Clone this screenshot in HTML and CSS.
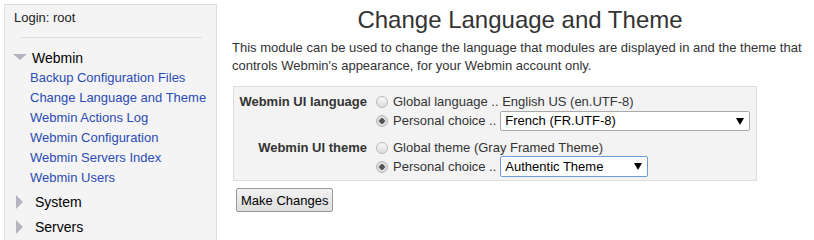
FILE: index.html
```html
<!DOCTYPE html>
<html lang="en">
<head>
    <meta charset="UTF-8">
    <title>Change Language and Theme</title>
    <link rel="stylesheet" href="styles.css">
</head>
<body>
    <div class="frame">
        <!-- Left menu -->
        <div class="sidebar">
            <div class="login">Login: root</div>
            <hr class="sep">
            <div class="cat open"><span class="tri-down"></span>Webmin</div>
            <ul class="mods">
                <li><a href="#">Backup Configuration Files</a></li>
                <li><a href="#">Change Language and Theme</a></li>
                <li><a href="#">Webmin Actions Log</a></li>
                <li><a href="#">Webmin Configuration</a></li>
                <li><a href="#">Webmin Servers Index</a></li>
                <li><a href="#">Webmin Users</a></li>
            </ul>
            <div class="cat"><span class="tri-right"></span>System</div>
            <div class="cat"><span class="tri-right"></span>Servers</div>
        </div>

        <!-- Module page -->
        <div class="main">
            <h1>Change Language and Theme</h1>
            <p class="intro">This module can be used to change the language that modules are displayed in and the theme that controls Webmin's appearance, for your Webmin account only.</p>

            <form class="lang-form">
                <div class="box">
                    <div class="label">Webmin UI language</div>
                    <div class="opts">
                        <label class="opt"><input type="radio" name="lang">Global language .. English US (en.UTF-8)</label>
                        <label class="opt"><input type="radio" name="lang" checked>Personal choice ..<span class="sel wide"><select><option>French (FR.UTF-8)</option></select></span></label>
                    </div>
                    <div class="label">Webmin UI theme</div>
                    <div class="opts">
                        <label class="opt"><input type="radio" name="theme">Global theme (Gray Framed Theme)</label>
                        <label class="opt"><input type="radio" name="theme" checked>Personal choice ..<span class="sel focus"><select><option>Authentic Theme</option></select></span></label>
                    </div>
                </div>
                <button type="submit">Make Changes</button>
            </form>
        </div>
    </div>
</body>
</html>
```

FILE: styles.css
```css
body {
    margin: 0;
    font-family: "Liberation Sans", Arial, sans-serif;
    font-size: 13px;
    color: #333;
    background-color: #fff;
}

.frame {
    display: flex;
    padding: 4px 0 0 4px;
    height: 236px;
    overflow: hidden;
}

.sidebar {
    width: 211px;
    flex-shrink: 0;
    background-color: #f4f4f4;
    border: 1px solid #ddd;
    border-bottom: none;
    padding: 5px 0 0 0;
}

.login {
    padding-left: 9px;
    color: #222;
    line-height: 16px;
}

.sep {
    border: none;
    border-top: 1px solid #ddd;
    margin: 11px 14px 0 16px;
}

.cat {
    display: flex;
    align-items: center;
    color: #000;
    font-size: 14px;
    height: 25px;
    padding-left: 8px;
}

.cat.open {
    margin-top: 10px;
    height: 20px;
}

.tri-down {
    width: 0;
    height: 0;
    border-left: 7px solid transparent;
    border-right: 7px solid transparent;
    border-top: 6px solid #b4b4c0;
    margin-right: 5px;
    margin-bottom: 3px;
}

.tri-right {
    width: 0;
    height: 0;
    border-top: 7px solid transparent;
    border-bottom: 7px solid transparent;
    border-left: 7px solid #b4b4c0;
    margin: 0 12px 0 3px;
}

.mods {
    list-style: none;
    margin: 0;
    padding: 0 0 1px 25px;
}

.mods li {
    line-height: 20px;
}

.mods a {
    color: #2b4bb5;
    text-decoration: none;
}

.main {
    flex: 1;
    padding-left: 15px;
    padding-right: 6px;
}

h1 {
    margin: 1px 0 0 0;
    text-align: center;
    font-weight: normal;
    font-size: 24px;
    line-height: 30px;
    color: #333;
}

.intro {
    margin: 4px 0 0 0;
    line-height: 18px;
}

.lang-form {
    margin-top: 11px;
}

.box {
    width: 512px;
    margin-left: 1px;
    display: grid;
    grid-template-columns: 128px 1fr;
    column-gap: 9px;
    row-gap: 8px;
    background-color: #f3f3f3;
    border: 1px solid #ddd;
    padding: 5px 5px 4px 5px;
}

.label {
    text-align: right;
    font-weight: bold;
    line-height: 19px;
    white-space: nowrap;
}

.opts {
    display: flex;
    flex-direction: column;
}

.opt {
    display: flex;
    align-items: center;
    height: 19px;
    white-space: nowrap;
}

.opt input {
    appearance: none;
    width: 12px;
    height: 12px;
    margin: 0 5px 0 0;
    border: 1px solid #b9b9b9;
    border-radius: 50%;
    background: linear-gradient(#fafafa, #dcdcdc);
}

.opt input:checked {
    background: radial-gradient(circle, #555 0, #555 2.5px, #e2e2e2 3px, #d0d0d0 100%);
}

.sel {
    position: relative;
    display: inline-block;
    margin-left: 4px;
}

.sel select {
    appearance: none;
    display: block;
    font-family: inherit;
    font-size: 13px;
    color: #000;
    background-color: #fff;
    border: 1px solid #a9a9a9;
    border-radius: 2px;
    height: 20px;
    padding: 0 0 0 4px;
    width: 148px;
}

.sel.wide select {
    width: 250px;
}

.sel.focus select {
    height: 21px;
    border-color: #6b9bd8;
}

.sel::after {
    content: "";
    position: absolute;
    right: 6px;
    top: 7px;
    border-left: 4px solid transparent;
    border-right: 4px solid transparent;
    border-top: 7px solid #000;
    pointer-events: none;
}

button {
    margin: 7px 0 0 4px;
    font-family: inherit;
    font-size: 13px;
    color: #000;
    background: linear-gradient(#f2f2f2, #dedede);
    border: 1px solid #999;
    border-radius: 2px;
    height: 24px;
    padding: 0 4px;
}
```
